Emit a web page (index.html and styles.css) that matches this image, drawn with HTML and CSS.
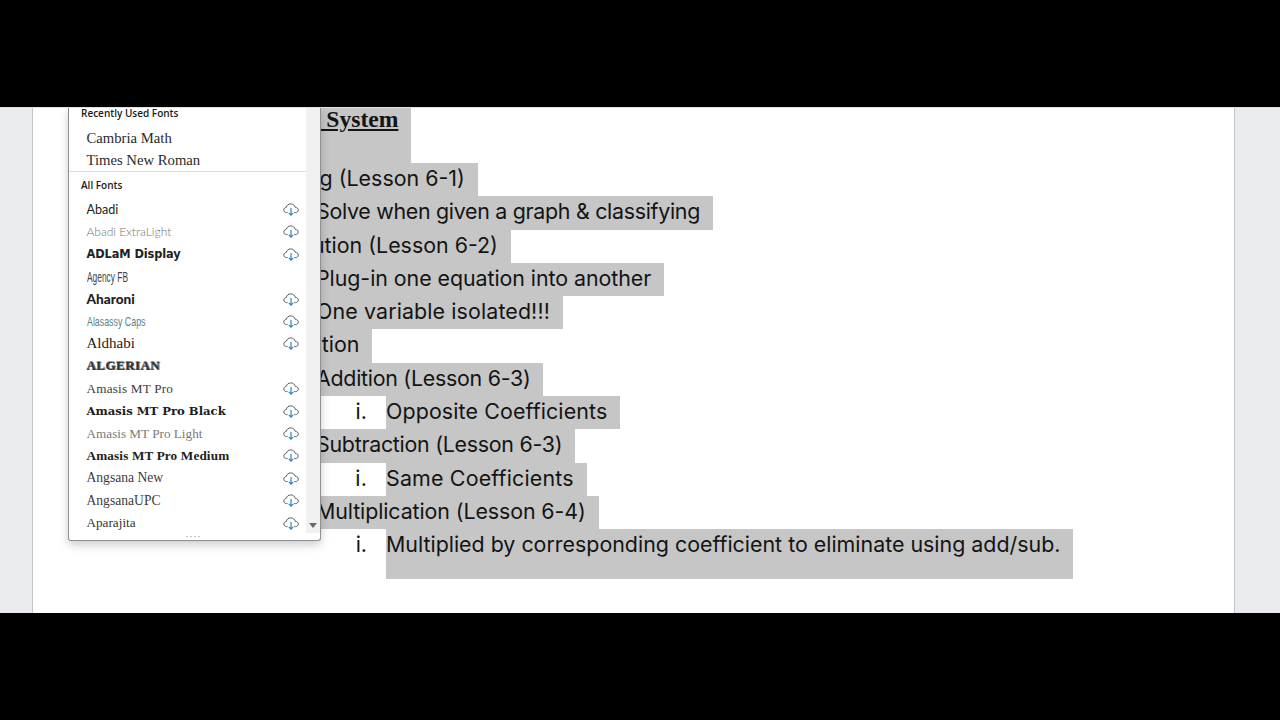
FILE: index.html
```html
<!DOCTYPE html>
<html lang="en">
<head>
<meta charset="utf-8">
<title>Font menu over document</title>
<link rel="stylesheet" href="styles.css">
</head>
<body>
<svg class="defs" width="0" height="0" aria-hidden="true">
  <symbol id="cloud" viewBox="0 0 16 13">
    <path d="M4.6 9.6H3.6C2 9.6.8 8.5.8 7c0-1.4 1-2.4 2.4-2.5C3.6 2.4 5.5.9 7.8.9c2.2 0 4 1.4 4.5 3.5 1.7 0 3 1.1 3 2.7 0 1.4-1.2 2.5-2.8 2.5h-1.3" fill="none" stroke="#5a5f64" stroke-width="1"/>
    <path d="M8 5v7M5.8 9.8 8 12.2l2.2-2.4" fill="none" stroke="#2b8cc4" stroke-width="1.2"/>
  </symbol>
</svg>
<div class="band"></div>
<main class="stage">
  <section class="page">
    <div class="line heading"><span class="sel"><u>Solving a System</u></span></div>
    <div class="line l1 shift-1"><span class="mark">1.</span><span class="sel">Graphing (Lesson 6-1)</span></div>
    <div class="line l2 ls-tight"><span class="mark">a.</span><span class="sel">Solve when given a graph &amp; classifying</span></div>
    <div class="line l1 shift-3"><span class="mark">2.</span><span class="sel">Substitution (Lesson 6-2)</span></div>
    <div class="line l2 ls-plug"><span class="mark">a.</span><span class="sel">Plug-in one equation into another</span></div>
    <div class="line l2 ls-one"><span class="mark">b.</span><span class="sel">One variable isolated!!!</span></div>
    <div class="line l1 shift-11"><span class="mark">3.</span><span class="sel">Elimination</span></div>
    <div class="line l2 ls-sub"><span class="mark">a.</span><span class="sel">Addition (Lesson 6-3)</span></div>
    <div class="line l3 ls-opp"><span class="mark">i.</span><span class="sel">Opposite Coefficients</span></div>
    <div class="line l2 ls-sub"><span class="mark">b.</span><span class="sel">Subtraction (Lesson 6-3)</span></div>
    <div class="line l3 ls-same"><span class="mark">i.</span><span class="sel">Same Coefficients</span></div>
    <div class="line l2 ls-mult"><span class="mark">c.</span><span class="sel">Multiplication (Lesson 6-4)</span></div>
    <div class="line l3 last"><span class="mark">i.</span><span class="sel">Multiplied by corresponding coefficient to eliminate using add/sub.</span></div>
  </section>

  <aside class="menu">
    <div class="menu-body">
      <div class="menu-list">
        <div class="group-title first">Recently Used Fonts</div>
        <div class="recent f-times">Cambria Math</div>
        <div class="recent f-times">Times New Roman</div>
        <div class="divider"></div>
        <div class="group-title">All Fonts</div>
        <div class="font"><span class="f-abadi">Abadi</span><svg class="cloud"><use href="#cloud"/></svg></div>
        <div class="font"><span class="f-abadi-light">Abadi ExtraLight</span><svg class="cloud"><use href="#cloud"/></svg></div>
        <div class="font"><span class="f-adlam">ADLaM Display</span><svg class="cloud"><use href="#cloud"/></svg></div>
        <div class="font"><span class="f-agency">Agency FB</span></div>
        <div class="font"><span class="f-aharoni">Aharoni</span><svg class="cloud"><use href="#cloud"/></svg></div>
        <div class="font"><span class="f-alasassy">Alasassy Caps</span><svg class="cloud"><use href="#cloud"/></svg></div>
        <div class="font"><span class="f-aldhabi">Aldhabi</span><svg class="cloud"><use href="#cloud"/></svg></div>
        <div class="font"><span class="f-algerian">ALGERIAN</span></div>
        <div class="font"><span class="f-amasis">Amasis MT Pro</span><svg class="cloud"><use href="#cloud"/></svg></div>
        <div class="font"><span class="f-amasis-black">Amasis MT Pro Black</span><svg class="cloud"><use href="#cloud"/></svg></div>
        <div class="font"><span class="f-amasis-light">Amasis MT Pro Light</span><svg class="cloud"><use href="#cloud"/></svg></div>
        <div class="font"><span class="f-amasis-medium">Amasis MT Pro Medium</span><svg class="cloud"><use href="#cloud"/></svg></div>
        <div class="font"><span class="f-angsana">Angsana New</span><svg class="cloud"><use href="#cloud"/></svg></div>
        <div class="font"><span class="f-angsana">AngsanaUPC</span><svg class="cloud"><use href="#cloud"/></svg></div>
        <div class="font"><span class="f-aparajita">Aparajita</span><svg class="cloud"><use href="#cloud"/></svg></div>
      </div>
      <div class="scrollbar"><span class="arrow"></span></div>
    </div>
    <div class="grip"><span></span><span></span><span></span><span></span></div>
  </aside>
</main>
<div class="band"></div>
</body>
</html>
```
FILE: styles.css
```css
* { box-sizing: border-box; }
html, body { margin: 0; height: 100%; }
body {
  width: 1280px;
  height: 720px;
  display: flex;
  flex-direction: column;
  background: #000;
  overflow: hidden;
}
.defs { position: absolute; }
.band { height: 107px; background: #000; flex: none; }

.stage {
  position: relative;
  flex: 1;
  min-height: 0;
  overflow: hidden;
  background: #e9ebef;
  border-top: 1px solid #dfe1e4;
  padding: 0 45px 0 32px;
  display: flex;
}
.page {
  flex: 1;
  background: #fff;
  border-left: 1px solid #c4c5c9;
  border-right: 1px solid #c4c5c9;
  font-family: Inter, "Noto Sans", sans-serif;
  font-size: 21.4px;
  line-height: 30px;
  color: #141414;
  overflow: hidden;
}
.line { display: flex; height: 33.3px; }
.mark { text-align: right; flex: none; }
.sel {
  background: #c6c6c6;
  padding-right: 13px;
  white-space: nowrap;
}
.heading {
  height: 55px;
  padding-left: 195px;
  font-family: "Liberation Serif", serif;
  font-weight: 700;
  font-size: 23.6px;
  line-height: 23px;
}
.heading .sel { height: 55px; }
.l1 { padding-left: 120px; }
.l1 .mark { width: 60px; margin-right: 26px; }
.shift-1 { padding-left: 121px; }
.shift-3 { padding-left: 123px; }
.shift-11 { padding-left: 131px; }
.l2 { padding-left: 200px; }
.l2 .mark { width: 50px; margin-right: 33px; }
.l3 { padding-left: 280px; }
.l3 .mark { width: 54px; margin-right: 19px; }
.last { height: 50px; }
.last .sel { height: 50px; }
.ls-tight { letter-spacing: -.29px; }
.ls-plug { letter-spacing: -.06px; }
.ls-one { letter-spacing: .12px; }
.ls-sub { letter-spacing: -.27px; }
.ls-opp { letter-spacing: .12px; }
.ls-same { letter-spacing: .18px; }
.ls-mult { letter-spacing: -.1px; }

.menu {
  position: absolute;
  left: 68px;
  top: 0;
  width: 253px;
  height: 433px;
  background: #fff;
  border: 1px solid #8f8f8f;
  border-top: 0;
  border-radius: 0 0 3px 3px;
  box-shadow: 0 4px 10px rgba(0, 0, 0, .2);
  display: flex;
  flex-direction: column;
  color: #242424;
}
.menu-body { flex: 1; min-height: 0; display: flex; }
.menu-list { flex: 1; min-width: 0; }
.scrollbar {
  width: 14px;
  background: #f1f1f1;
  display: flex;
  flex-direction: column;
  justify-content: flex-end;
  align-items: center;
  padding: 0 1px 5px 0;
}
.arrow {
  width: 0;
  height: 0;
  border-left: 4px solid transparent;
  border-right: 4px solid transparent;
  border-top: 5px solid #6a6a6a;
}
.grip {
  height: 7px;
  flex: none;
  display: flex;
  justify-content: center;
  align-items: center;
  gap: 2px;
  padding: 0 3px 1px 0;
}
.grip span { width: 2px; height: 1px; background: #c4c4c4; }

.group-title {
  font-family: "Open Sans", "Noto Sans", sans-serif;
  font-weight: 600;
  font-size: 10px;
  line-height: 11px;
  height: 11px;
  padding-left: 12px;
  color: #1c1c1c;
}
.recent {
  height: 21.5px;
  line-height: 21.5px;
  padding-left: 17.5px;
  font-size: 14.7px;
}
.recent:nth-of-type(2) { margin-top: 9px; }
.f-times { font-family: "Liberation Serif", serif; color: #2a2a2a; }
.divider { height: 1px; margin: 0 0 8px; background: #dcdcdc; }
.divider + .group-title { margin-bottom: 7.3px; }
.font {
  height: 22.42px;
  padding: 0 7px 0 17.5px;
  display: flex;
  align-items: center;
  justify-content: space-between;
  white-space: nowrap;
}
.cloud { width: 16px; height: 13px; flex: none; }

.f-abadi { font: 400 12.6px Lato, sans-serif; color: #222; }
.f-abadi-light { font: 300 12px Lato, sans-serif; color: #6f747c; }
.f-adlam { font: 700 11.4px "DejaVu Sans", sans-serif; letter-spacing: -.1px; color: #222; }
.f-agency {
  display: inline-block;
  font: 400 15px "Liberation Sans", sans-serif;
  color: #444;
  transform: scaleX(.56);
  transform-origin: left center;
}
.f-aharoni { font: 900 13.6px Lato, sans-serif; color: #222; }
.f-alasassy {
  display: inline-block;
  font: 400 13px "Liberation Sans", sans-serif;
  color: #5c7f8c;
  transform: scaleX(.68);
  transform-origin: left center;
}
.f-aldhabi { font: 400 15px "Liberation Serif", serif; color: #222; }
.f-algerian {
  font: 700 13px "Liberation Serif", serif;
  color: #333;
  letter-spacing: .45px;
  text-shadow: 0 -1px 0 #888, 1px 0 0 #777;
}
.f-amasis { font: 400 13.2px "Liberation Serif", serif; color: #3c3c3c; letter-spacing: .2px; }
.f-amasis-black { font: 700 11.6px "DejaVu Serif", serif; color: #1c1c1c; }
.f-amasis-light { font: 400 13.2px "Liberation Serif", serif; color: #7a7a7a; }
.f-amasis-medium { font: 700 13.2px "Liberation Serif", serif; color: #222; letter-spacing: .15px; }
.f-angsana { font: 400 13.6px "Liberation Serif", serif; color: #3c3c3c; }
.f-aparajita { font: 400 13.2px "Liberation Serif", serif; color: #333; }
```
